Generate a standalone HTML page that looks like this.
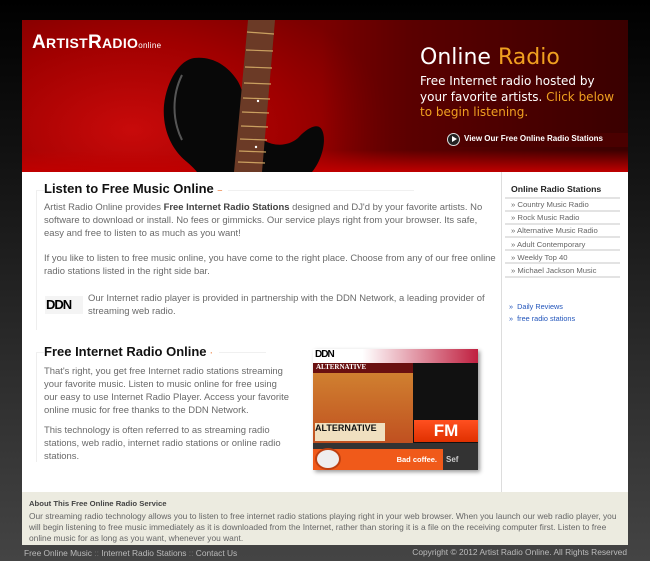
<!DOCTYPE html>
<html><head><meta charset="utf-8"><style>
*{margin:0;padding:0;box-sizing:border-box}
body{width:650px;height:561px;overflow:hidden;background:linear-gradient(#000 0,#111 150px,#2a2a2a 350px,#444 561px);font-family:"Liberation Sans",sans-serif;position:relative}
.a{position:absolute;white-space:nowrap}
.t{font-size:9.45px;color:#6a6a6a}
.h{font-size:13px;font-weight:bold;color:#111}
.sb{font-size:7.7px;color:#666;left:511px}
.ln{position:absolute;left:505px;width:115px;height:2px;background:#e3e3e3}
</style></head><body>
<div class="a" style="left:22px;top:20px;width:606px;height:152px;background:radial-gradient(ellipse 260px 150px at 110px 110px,#c80a0a,#a00000 60%,#7a0000);overflow:hidden">
 <div class="a" style="left:300px;top:0;width:306px;height:152px;background:linear-gradient(90deg,rgba(80,0,0,0),#5a0000 30%,#3a0000)"></div>
 <div class="a" style="left:0;top:130px;width:606px;height:22px;background:linear-gradient(rgba(200,0,0,0),#c00000)"></div>
 <svg class="a" style="left:0;top:0" width="606" height="152">
  <path d="M172 38 C158 40 145 60 142 85 C140 110 150 130 165 142 C172 148 175 152 175 152 L290 152 C300 140 305 120 300 110 C296 102 285 108 276 118 C262 130 240 125 232 110 C225 95 222 70 215 60 C205 45 190 36 172 38 Z" fill="#080808"/>
  <path d="M160 55 C150 75 150 100 160 120" stroke="#555" stroke-width="2" fill="none"/>
  <polygon points="226,0 253,0 240,152 212,152" fill="#6b3a26"/>
  <g stroke="#caa060" stroke-width="1.2">
   <line x1="225" y1="12" x2="252" y2="14"/><line x1="224" y1="30" x2="251" y2="31"/><line x1="223" y1="47" x2="250" y2="48"/><line x1="222" y1="63" x2="249" y2="64"/><line x1="221" y1="78" x2="248" y2="79"/><line x1="220" y1="92" x2="247" y2="93"/><line x1="219" y1="106" x2="246" y2="107"/><line x1="218" y1="119" x2="245" y2="120"/><line x1="217" y1="131" x2="244" y2="132"/><line x1="216" y1="142" x2="243" y2="143"/>
  </g>
  <circle cx="236" cy="81" r="1.2" fill="#fff"/><circle cx="234" cy="127" r="1.2" fill="#fff"/>
 </svg>
 <div class="a" style="left:10px;top:12px;color:#fff;font-weight:bold;font-size:19px;letter-spacing:0.3px">A<span style="font-size:14px">RTIST</span>R<span style="font-size:14px">ADIO</span><span style="font-size:8px;font-weight:normal">online</span></div>
 <div class="a" style="left:398px;top:25px;color:#fff;font-size:22px;font-family:'DejaVu Sans',sans-serif">Online <span style="color:#f0a020">Radio</span></div>
 <div class="a" style="left:398px;top:54px;color:#fff;font-size:12px;line-height:15.5px;font-family:'DejaVu Sans',sans-serif">Free Internet radio hosted by<br>your favorite artists. <span style="color:#f0a020">Click below</span><br><span style="color:#f0a020">to begin listening.</span></div>
 <div class="a" style="left:425px;top:113px;width:181px;height:14px;background:linear-gradient(90deg,rgba(60,0,0,0),#4a0000 20%)"></div>
 <div class="a" style="left:425px;top:113px;width:13px;height:13px;border:1px solid #ddd;border-radius:50%;background:#222"></div>
 <div class="a" style="left:430px;top:116px;width:0;height:0;border-left:5px solid #fff;border-top:3.5px solid transparent;border-bottom:3.5px solid transparent"></div>
 <div class="a" style="left:442px;top:114px;color:#fff;font-size:8px;font-weight:bold">View Our Free Online Radio Stations</div>
</div>
<div class="a" style="left:22px;top:172px;width:606px;height:320px;background:#fff"></div>
<div class="a" style="left:501px;top:172px;width:1px;height:320px;background:#ddd"></div>
<div class="a" style="left:36px;top:190px;width:1px;height:140px;background:#eee"></div>
<div class="a" style="left:36px;top:190px;width:378px;height:1px;background:#f0f0f0"></div>
<div class="a h" style="left:44px;top:181px;background:#fff;padding-right:6px">Listen to Free Music Online <span style="color:#f0a070;font-size:9px">–</span></div>
<div class="a t" style="left:44px;top:201px;line-height:13px">Artist Radio Online provides <b style="color:#444">Free Internet Radio Stations</b> designed and DJ'd by your favorite artists. No<br>software to download or install. No fees or gimmicks. Our service plays right from your browser. Its safe,<br>easy and free to listen to as much as you want!</div>
<div class="a t" style="left:44px;top:252px;line-height:13px">If you like to listen to free music online, you have come to the right place. Choose from any of our free online<br>radio stations listed in the right side bar.</div>
<div class="a" style="left:45px;top:296px;width:38px;height:18px;background:#f4f4f4"></div>
<div class="a" style="left:46px;top:297px;font-size:13px;font-weight:900;color:#000;letter-spacing:-1px">DDN</div>
<div class="a t" style="left:88px;top:292px;line-height:13px">Our Internet radio player is provided in partnership with the DDN Network, a leading provider of<br>streaming web radio.</div>
<div class="a" style="left:36px;top:352px;width:1px;height:110px;background:#eee"></div>
<div class="a" style="left:36px;top:352px;width:230px;height:1px;background:#f0f0f0"></div>
<div class="a h" style="left:44px;top:344px;background:#fff;padding-right:6px">Free Internet Radio Online <span style="color:#f0a070;font-size:9px">·</span></div>
<div class="a t" style="left:44px;top:365px;line-height:13px">That's right, you get free Internet radio stations streaming<br>your favorite music. Listen to music online for free using<br>our easy to use Internet Radio Player. Access your favorite<br>online music for free thanks to the DDN Network.</div>
<div class="a t" style="left:44px;top:424px;line-height:13px">This technology is often referred to as streaming radio<br>stations, web radio, internet radio stations or online radio<br>stations.</div>
<div class="a" style="left:313px;top:349px;width:165px;height:121px;background:#111;box-shadow:2px 2px 4px #999"></div>
<div class="a" style="left:313px;top:349px;width:165px;height:14px;background:linear-gradient(90deg,#fff 30%,#c02040)"></div>
<div class="a" style="left:315px;top:349px;font-size:10px;font-weight:900;letter-spacing:-1px">DDN</div>
<div class="a" style="left:313px;top:363px;width:100px;height:10px;background:#6a1010;color:#fff;font-size:7px;font-weight:bold;font-family:'Liberation Serif',serif;padding-left:3px">ALTERNATIVE</div>
<div class="a" style="left:313px;top:373px;width:100px;height:70px;background:linear-gradient(#d08030,#c05020)"></div>
<div class="a" style="left:315px;top:423px;width:70px;height:18px;background:#f0e0c0;color:#111;font-size:9px;font-weight:bold;line-height:11px">ALTERNATIVE</div>
<div class="a" style="left:414px;top:420px;width:64px;height:22px;background:linear-gradient(#ff5020,#e03000);color:#fff;font-size:17px;font-weight:bold;text-align:center;line-height:22px">FM</div>
<div class="a" style="left:313px;top:443px;width:165px;height:6px;background:#333"></div>
<div class="a" style="left:313px;top:449px;width:130px;height:21px;background:#f05a1a;color:#fff;font-size:7.5px;font-weight:bold;text-align:right;padding-right:6px;line-height:21px">Bad coffee.</div>
<div class="a" style="left:315px;top:448px;width:26px;height:22px;border-radius:50%;background:#eee;border:2px solid #c04010"></div>
<div class="a" style="left:443px;top:449px;width:35px;height:21px;background:#333;color:#ccc;font-size:8px;font-weight:bold;line-height:21px;padding-left:3px">Sef</div>
<div class="a" style="left:511px;top:184px;font-size:8.7px;font-weight:bold;color:#222">Online Radio Stations</div>
<div class="ln" style="top:197px"></div>
<div class="a sb" style="top:200px">» Country Music Radio</div><div class="ln" style="top:210px"></div>
<div class="a sb" style="top:213px">» Rock Music Radio</div><div class="ln" style="top:223px"></div>
<div class="a sb" style="top:226px">» Alternative Music Radio</div><div class="ln" style="top:236px"></div>
<div class="a sb" style="top:240px">» Adult Contemporary</div><div class="ln" style="top:249px"></div>
<div class="a sb" style="top:253px">» Weekly Top 40</div><div class="ln" style="top:262px"></div>
<div class="a sb" style="top:266px">» Michael Jackson Music</div><div class="ln" style="top:276px"></div>
<div class="a" style="left:509px;top:301px;font-size:7.3px;color:#2255bb;line-height:11.5px">»&nbsp; Daily Reviews<br>»&nbsp; free radio stations</div>
<div class="a" style="left:22px;top:492px;width:606px;height:53px;background:#ecebe0"></div>
<div class="a" style="left:29px;top:499px;font-size:7.7px;font-weight:bold;color:#444">About This Free Online Radio Service</div>
<div class="a" style="left:29px;top:511px;font-size:8.4px;color:#666;line-height:11px">Our streaming radio technology allows you to listen to free internet radio stations playing right in your web browser. When you launch our web radio player, you<br>will begin listening to free music immediately as it is downloaded from the Internet, rather than storing it is a file on the receiving computer first. Listen to free<br>online music for as long as you want, whenever you want.</div>
<div class="a" style="left:24px;top:548px;font-size:8.4px;color:#bbb">Free Online Music <span style="color:#777">::</span> Internet Radio Stations <span style="color:#777">::</span> Contact Us</div>
<div class="a" style="right:23px;top:547px;font-size:8.4px;color:#bbb">Copyright © 2012 Artist Radio Online. All Rights Reserved</div>
</body></html>
